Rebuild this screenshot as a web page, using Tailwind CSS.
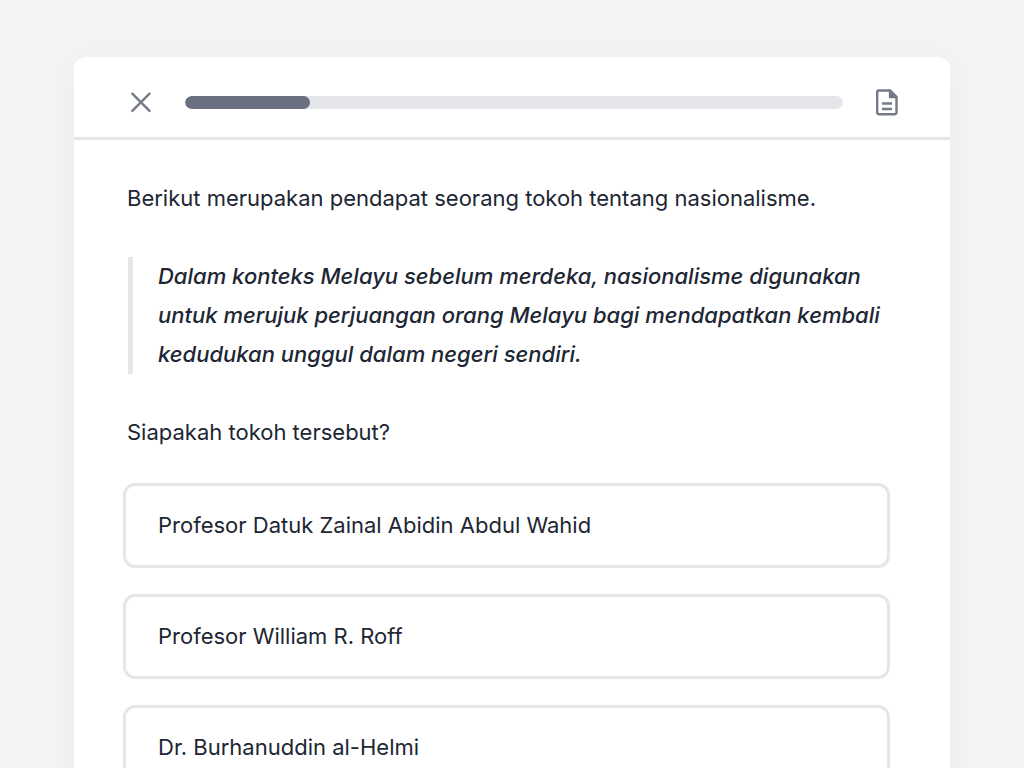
<!DOCTYPE html>
<html lang="ms">
<head>
  <meta charset="UTF-8">
  <meta name="viewport" content="width=device-width, initial-scale=1.0">
  <title>Kuiz Sejarah</title>
  <script src="https://cdn.jsdelivr.net/npm/@tailwindcss/browser@4"></script>
</head>
<body class="bg-[#f2f4f6] font-['Inter',sans-serif] text-[#202633] text-[22px] leading-[39px] px-[74px] pt-[57px]">
  <main class="bg-white rounded-t-xl shadow-[0_4px_44px_rgba(0,0,0,0.04)]">
    <!-- Bar atas -->
    <header class="flex items-center h-[83px] border-b-3 border-[#e5e6ea] pl-[52px] pr-[48px] pt-[10px]">
      <button type="button" aria-label="Tutup" class="p-1 text-[#757a87]">
        <svg class="size-[22px]" viewBox="0 0 22 22" fill="none" stroke="currentColor" stroke-width="2.4" stroke-linecap="round"><path d="M2.3 2.7l17.2 17.2M19.5 2.7L2.3 19.9"/></svg>
      </button>
      <div role="progressbar" aria-label="Kemajuan" aria-valuenow="19" aria-valuemin="0" aria-valuemax="100" class="flex-1 h-[13px] mx-[29px] rounded-full bg-[#e5e6ea] overflow-hidden">
        <div class="h-full rounded-full bg-[#6b7080]" style="width: 19%"></div>
      </div>
      <button type="button" aria-label="Nota" class="text-[#757a87]">
        <svg class="size-[30px]" viewBox="0 0 30 30" fill="none" stroke="currentColor" stroke-width="2.4" stroke-linejoin="round"><path d="M7 3.500h11l6.500 6.500v15.500a1.800 1.800 0 0 1-1.800 1.800H7a1.800 1.800 0 0 1-1.800-1.800V5.300A1.800 1.800 0 0 1 7 3.500z"/><path d="M18 3.500V10h6.500z" fill="currentColor"/><path d="M10 16.500h10M10 22h10"/></svg>
      </button>
    </header>

    <section class="pl-[49px] pr-[60px] pt-[39px]">
      <p class="px-1">Berikut merupakan pendapat seorang tokoh tentang nasionalisme.</p>
      <blockquote class="my-[39px] ml-[5px] border-l-5 border-[#e5e6ea] pl-[25px] -mr-4 font-medium italic">
        Dalam konteks Melayu sebelum merdeka, nasionalisme digunakan untuk merujuk perjuangan orang Melayu bagi mendapatkan kembali kedudukan unggul dalam negeri sendiri.
      </blockquote>
      <p class="px-1">Siapakah tokoh tersebut?</p>

      <div class="mt-[31px] flex flex-col gap-[26px]">
        <button type="button" class="h-[85px] rounded-xl border-3 border-[#e5e6ea] px-8 text-left">Profesor Datuk Zainal Abidin Abdul Wahid</button>
        <button type="button" class="h-[85px] rounded-xl border-3 border-[#e5e6ea] px-8 text-left">Profesor William R. Roff</button>
        <button type="button" class="h-[85px] rounded-xl border-3 border-[#e5e6ea] px-8 text-left">Dr. Burhanuddin al-Helmi</button>
      </div>
    </section>
  </main>
</body>
</html>
